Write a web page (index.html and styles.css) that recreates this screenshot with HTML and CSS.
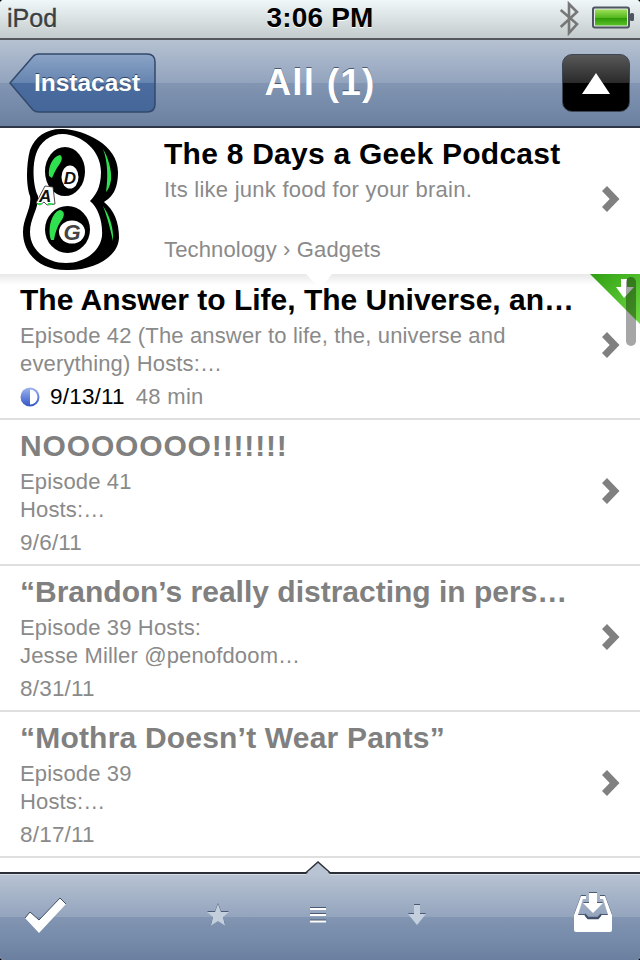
FILE: index.html
```html
<!DOCTYPE html>
<html lang="en">
<head>
<meta charset="utf-8">
<title>Instacast</title>
<link rel="stylesheet" href="styles.css">
</head>
<body>
<div class="app">
  <header class="status">
    <span class="carrier">iPod</span>
    <span class="time">3:06 PM</span>
    <span class="status-icons">
      <svg class="bt" width="22" height="36" viewBox="0 0 22 36"><path d="M1.700 10 L18 24 L10 33 L10 4 L18 12 L1.700 27" fill="none" stroke="#777" stroke-width="2.600"/></svg>
      <svg class="batt" width="44" height="24" viewBox="0 0 44 24"><rect x="1" y="1.500" width="36" height="20" rx="2" fill="#e4e8e8" stroke="#4c5560" stroke-width="2"/><rect x="3" y="3.500" width="32" height="16" fill="url(#bg)"/><rect x="38" y="7" width="4" height="8" rx="1.500" fill="#4c5560"/><defs><linearGradient id="bg" x1="0" y1="0" x2="0" y2="1"><stop offset="0" stop-color="#9ee05a"/><stop offset=".5" stop-color="#55b81e"/><stop offset=".55" stop-color="#2f9a08"/><stop offset="1" stop-color="#58c028"/></linearGradient></defs></svg>
    </span>
  </header>

  <nav class="nav">
    <a class="back">
      <svg class="back-shape" width="148" height="60" viewBox="0 0 148 60"><defs><linearGradient id="backg" x1="0" y1="0" x2="0" y2="1"><stop offset="0" stop-color="#8ba4c6"/><stop offset=".5" stop-color="#6584b0"/><stop offset=".5" stop-color="#4b6c9e"/><stop offset="1" stop-color="#456698"/></linearGradient></defs><path d="M1 30 L24 3.500 Q26 1 30 1 L138 1 Q146 1 146 9 L146 51 Q146 59 138 59 L30 59 Q26 59 24 57 Z" fill="url(#backg)" stroke="#33496b" stroke-width="1.500"/></svg>
      <span class="back-label">Instacast</span>
    </a>
    <h1 class="nav-title">All (1)</h1>
    <a class="up"><svg width="28" height="21" viewBox="0 0 28 21"><path d="M14 0 L28 21 L0 21 Z" fill="#fff"/></svg></a>
  </nav>

  <section class="podcast">
    <svg class="logo" width="100" height="144" viewBox="22 128 100 144">
      <path d="M63 129 C85 130 118 145 118 172 C118 190 112 197 104 202 C114 210 119 222 119 238 C118 258 92 271 66 270 C40 270 23 254 23 232 C23 218 32 208 30 196 C26 186 26 165 30 150 C35 136 48 128 63 129 Z" fill="#000"/>
      <path d="M63 134 C82 135 101 150 101 172 C101 188 95 196 90 201 C98 207 103 222 102 236 C100 252 84 263 66 263 C46 263 30 250 30 232 C30 218 39 208 38 196 C33 186 32 166 36 154 C40 142 50 134 63 134 Z" fill="#fff"/>
      <path d="M103 149 C108 157 112 170 111 180 C110 186 108 190 106 192 C108 178 108 162 103 149 Z" fill="#2fe04f"/>
      <path d="M103 206 C108 213 114 226 113 241 C111 232 108 219 103 206 Z" fill="#2fe04f"/>
      <ellipse cx="65" cy="171.500" rx="20" ry="24.500" fill="#000"/>
      <ellipse cx="67.500" cy="229.500" rx="22.500" ry="23.500" fill="#000"/>
      <path d="M49 176 C48 167 52 157 60 155 C63 157 62 161 59 165 C56 169 54 173 52 178 Z" fill="#2fe04f"/>
      <path d="M51 240 C47 228 52 212 60 210 C65 211 65 216 61 221 C57 227 55 233 54 240 Z" fill="#2fe04f"/>
      <ellipse cx="70" cy="177" rx="8.500" ry="11.500" fill="#fff"/>
      <ellipse cx="72" cy="232" rx="13" ry="11.500" fill="#fff"/>
      <text x="70" y="184" class="logo-letter">D</text>
      <text x="72" y="240" class="logo-letter logo-g">G</text>
      <path d="M36 203 L45 186 L53 187 L55 204 L47 205 L44 202 L40 205 Z" fill="#fff" stroke="#222" stroke-width=".8"/>
      <path d="M38 203 h4 l-1 2 h-3 Z M48 203 h5 l-1 2 h-4 Z" fill="#2fe04f"/>
      <text x="39" y="202" class="logo-letter logo-a">A</text>
    </svg>
    <div class="podcast-body">
      <h2 class="podcast-title">The 8 Days a Geek Podcast</h2>
      <p class="podcast-sub">Its like junk food for your brain.</p>
      <p class="podcast-cat">Technology › Gadgets</p>
    </div>
    <svg class="chev chev-head" width="18" height="26" viewBox="0 0 18 26"><path d="M0 5 L5 0 L17.500 13 L5 26 L0 21 L7.700 13 Z" fill="#808080"/></svg>
    <svg class="pod-notch" width="26" height="15" viewBox="0 0 26 15"><path d="M0 0 H26 L14 15 Z" fill="#fff"/></svg>
  </section>

  <ul class="list">
    <li class="row row-new">
      <div class="row-body">
        <h3 class="row-title">The Answer to Life, The Universe, an…</h3>
        <p class="row-sub">Episode 42 (The answer to life, the, universe and<br>everything) Hosts:…</p>
        <p class="row-meta"><svg class="prog" width="20" height="20" viewBox="0 0 20 20"><defs><linearGradient id="pg" x1="0" y1="0" x2="0" y2="1"><stop offset="0" stop-color="#9db4ee"/><stop offset="1" stop-color="#3355c8"/></linearGradient></defs><circle cx="10" cy="10" r="9.500" fill="url(#pg)"/><path d="M10 2.500 A7.500 7.500 0 0 1 10 17.500 Z" fill="#fff"/></svg><span class="date">9/13/11</span><span class="dur">48 min</span></p>
      </div>
      <svg class="chev" width="18" height="26" viewBox="0 0 18 26"><path d="M0 5 L5 0 L17.500 13 L5 26 L0 21 L7.700 13 Z" fill="#808080"/></svg>
      <svg class="corner" width="50" height="50" viewBox="0 0 50 50"><defs><linearGradient id="cg" x1="0" y1="0" x2="1" y2="1"><stop offset="0" stop-color="#2f9e12"/><stop offset="1" stop-color="#6fdc42"/></linearGradient></defs><path d="M0 0 H50 V50 Z" fill="url(#cg)"/><path d="M31 5 H37 V13 H44 L34 24 L26 13 H31 Z" fill="#fff"/></svg>
      <span class="scrollbar"></span>
    </li>
    <li class="row">
      <div class="row-body">
        <h3 class="row-title row-title-loud">NOOOOOOO!!!!!!!</h3>
        <p class="row-sub">Episode 41<br>Hosts:…</p>
        <p class="row-meta"><span class="date">9/6/11</span></p>
      </div>
      <svg class="chev" width="18" height="26" viewBox="0 0 18 26"><path d="M0 5 L5 0 L17.500 13 L5 26 L0 21 L7.700 13 Z" fill="#808080"/></svg>
    </li>
    <li class="row">
      <div class="row-body">
        <h3 class="row-title">“Brandon’s really distracting in pers…</h3>
        <p class="row-sub">Episode 39 Hosts:<br>Jesse Miller @penofdoom…</p>
        <p class="row-meta"><span class="date">8/31/11</span></p>
      </div>
      <svg class="chev" width="18" height="26" viewBox="0 0 18 26"><path d="M0 5 L5 0 L17.500 13 L5 26 L0 21 L7.700 13 Z" fill="#808080"/></svg>
    </li>
    <li class="row">
      <div class="row-body">
        <h3 class="row-title row-title-open">“Mothra Doesn’t Wear Pants”</h3>
        <p class="row-sub">Episode 39<br>Hosts:…</p>
        <p class="row-meta"><span class="date">8/17/11</span></p>
      </div>
      <svg class="chev" width="18" height="26" viewBox="0 0 18 26"><path d="M0 5 L5 0 L17.500 13 L5 26 L0 21 L7.700 13 Z" fill="#808080"/></svg>
    </li>
  </ul>

  <footer class="toolbar">
    <svg class="tool-notch" width="28" height="16" viewBox="0 0 28 16"><path d="M2 14 L14 2 L26 14 V16 H2 Z" fill="#b8c3d3"/><path d="M1 13.500 L14 2 L27 13.500" fill="none" stroke="#2a2f36" stroke-width="1.500"/></svg>
    <svg class="t-check" width="42" height="35" viewBox="0 0 42 35"><path d="M0 20 L5 14 L14 22 L35 0 L41 6 L14 35 Z" fill="#fff"/><path d="M0 20 L5 14 L14 22 L35 0 L41 6" fill="none" stroke="#3f4e66" stroke-width="1"/></svg>
    <svg class="t-star tool-soft" width="22" height="22" viewBox="0 0 22 22"><path d="M11 0 L14 8 L22 8 L16 13 L18 21.500 L11 17 L4 21.500 L6 13 L0 8 L8 8 Z" fill="#c4cfde"/></svg>
    <svg class="t-lines tool-soft" width="16" height="16" viewBox="0 0 16 16"><path d="M0 1 H16 V3 H0 Z M0 7 H16 V9 H0 Z M0 13.500 H16 V15.500 H0 Z" fill="#fff"/></svg>
    <svg class="t-arrow tool-soft" width="18" height="20" viewBox="0 0 18 20"><path d="M6 0 H12 V9 H18 L9 20 L0 9 H6 Z" fill="#c4cfde"/></svg>
    <svg class="t-inbox tool-soft" width="38" height="39" viewBox="0 0 38 39"><path d="M7 3 H12 V6 H9 L4 22 H11 L14 26 H24 L27 22 H34 L29 6 H26 V3 H31 L38 22 V37 Q38 39 36 39 H2 Q0 39 0 37 V22 Z" fill="#fff"/><path d="M15 0 H23 V10 H29 L19 20 L9 10 H15 Z" fill="#fff"/><path d="M11 22 L14 25.500 H24 L27 22" fill="none" stroke="#3f4e66" stroke-width="1.500"/></svg>
  </footer>
</div>
</body>
</html>
```
FILE: styles.css
```css
* { box-sizing: border-box; margin: 0; padding: 0; }
html, body { width: 640px; height: 960px; overflow: hidden; background: #000; }
body { font-family: "Liberation Sans", Arial, sans-serif; }
.app { position: relative; width: 640px; height: 960px; display: flex; flex-direction: column; overflow: hidden; background: #fff; border-radius: 4px; }

.status { position: relative; flex: none; height: 40px; display: flex; align-items: center; justify-content: space-between; padding: 0 4px 2px 7px; background: linear-gradient(#eff7f9, #c4cbcc); border-bottom: 2px solid #55585c; }
.carrier { font-size: 25px; color: #3c3f42; text-shadow: 0 1px 0 #fff; -webkit-text-stroke: .4px #3c3f42; }
.time { position: absolute; left: 0; right: 0; text-align: center; font-size: 28px; letter-spacing: .2px; font-weight: 700; color: #000; text-shadow: 0 1px 0 #fff; }
.status-icons { display: flex; align-items: center; gap: 11px; }

.nav { position: relative; flex: none; height: 88px; display: flex; align-items: center; justify-content: space-between; padding: 0 10px 0 9px; background: linear-gradient(#b6c2d2 0, #92a3bd 50%, #8296b3 50%, #6b7fa0 100%); border-bottom: 2px solid #2d3644; }
.back { position: relative; display: flex; align-items: center; justify-content: center; width: 148px; height: 60px; padding-left: 8px; }
.back-shape { position: absolute; left: 0; top: 0; }
.back-label { position: relative; font-size: 24.500px; font-weight: 700; color: #fff; text-shadow: 0 -1px 0 #2e4468; }
.nav-title { position: absolute; left: 0; right: 0; text-align: center; font-size: 37px; letter-spacing: 1.200px; font-weight: 700; color: #fff; text-shadow: 0 -1px 0 #4a5a74; }
.up { display: flex; align-items: center; justify-content: center; width: 68px; height: 58px; border-radius: 10px; border: 1px solid #3d4654; background: linear-gradient(#585858 0, #2a2a2a 50%, #000 50%, #000 100%); }

.podcast { position: relative; z-index: 1; flex: none; height: 146px; display: flex; align-items: center; background: #fff; }
.logo { flex: none; margin-left: 22px; margin-bottom: 2px; }
.podcast-body { flex: 1; margin-left: 42px; display: flex; flex-direction: column; height: 146px; }
.podcast-title { margin-top: 9px; font-size: 30px; line-height: 34px; letter-spacing: .25px; font-weight: 700; color: #000; }
.podcast-sub { margin-top: 6px; font-size: 22px; line-height: 26px; letter-spacing: .25px; color: #8a8a8a; }
.podcast-cat { margin-top: 34px; font-size: 22px; line-height: 26px; letter-spacing: .15px; color: #8a8a8a; }
.chev { flex: none; align-self: center; margin-right: 20px; margin-bottom: 2px; }
.chev-head { margin-bottom: 4px; }
.pod-notch { position: absolute; left: 306px; bottom: -15px; }

.list { flex: 1; list-style: none; min-height: 0; background: linear-gradient(#e8e8e8 0, #fff 11px); }
.row { position: relative; display: flex; height: 146px; border-bottom: 2px solid #dfdfdf; }
.row-body { flex: 1; padding: 9px 0 0 20px; }
.row-title { font-size: 30px; line-height: 34px; font-weight: 700; color: #808080; white-space: nowrap; }
.row-title-loud { letter-spacing: .85px; }
.row-title-open { letter-spacing: .2px; }
.row-sub { margin-top: 5px; font-size: 22px; line-height: 28px; letter-spacing: .15px; color: #8a8a8a; }
.row-meta { display: flex; align-items: center; margin-top: 2px; height: 34px; font-size: 22px; color: #8a8a8a; }
.date { font-size: 22.500px; letter-spacing: .2px; }
.row-new .row-title, .row-new .date { color: #000; }
.prog { margin-right: 10px; }
.dur { margin-left: 11px; letter-spacing: .3px; }
.corner { position: absolute; right: 0; top: 0; }
.scrollbar { position: absolute; right: 4px; top: 3px; width: 10px; height: 69px; border-radius: 5px; background: rgba(0,0,0,.35); }
.logo-letter { font-size: 17px; font-weight: 700; font-style: italic; fill: #111; text-anchor: middle; }
.logo-g { font-size: 22px; fill: #444; }
.logo-a { font-size: 17px; text-anchor: start; }

.toolbar { position: relative; flex: none; height: 88px; display: flex; align-items: center; padding-bottom: 4px; background: linear-gradient(#b8c3d3 0, #93a4bd 50%, #8296b3 50%, #6b7fa0 100%); border-top: 2px solid #2a2f36; box-shadow: inset 0 1px 0 #d8dde4; }
.tool-notch { position: absolute; left: 304px; top: -14px; }
.tool-soft { filter: drop-shadow(0 -1px 0 #4a5a74); }
.t-check { margin-left: 25px; }
.t-star { margin-left: 140px; }
.t-lines { margin-left: 81px; }
.t-arrow { margin-left: 82px; }
.t-inbox { margin-left: 148px; margin-bottom: 5px; }
```
